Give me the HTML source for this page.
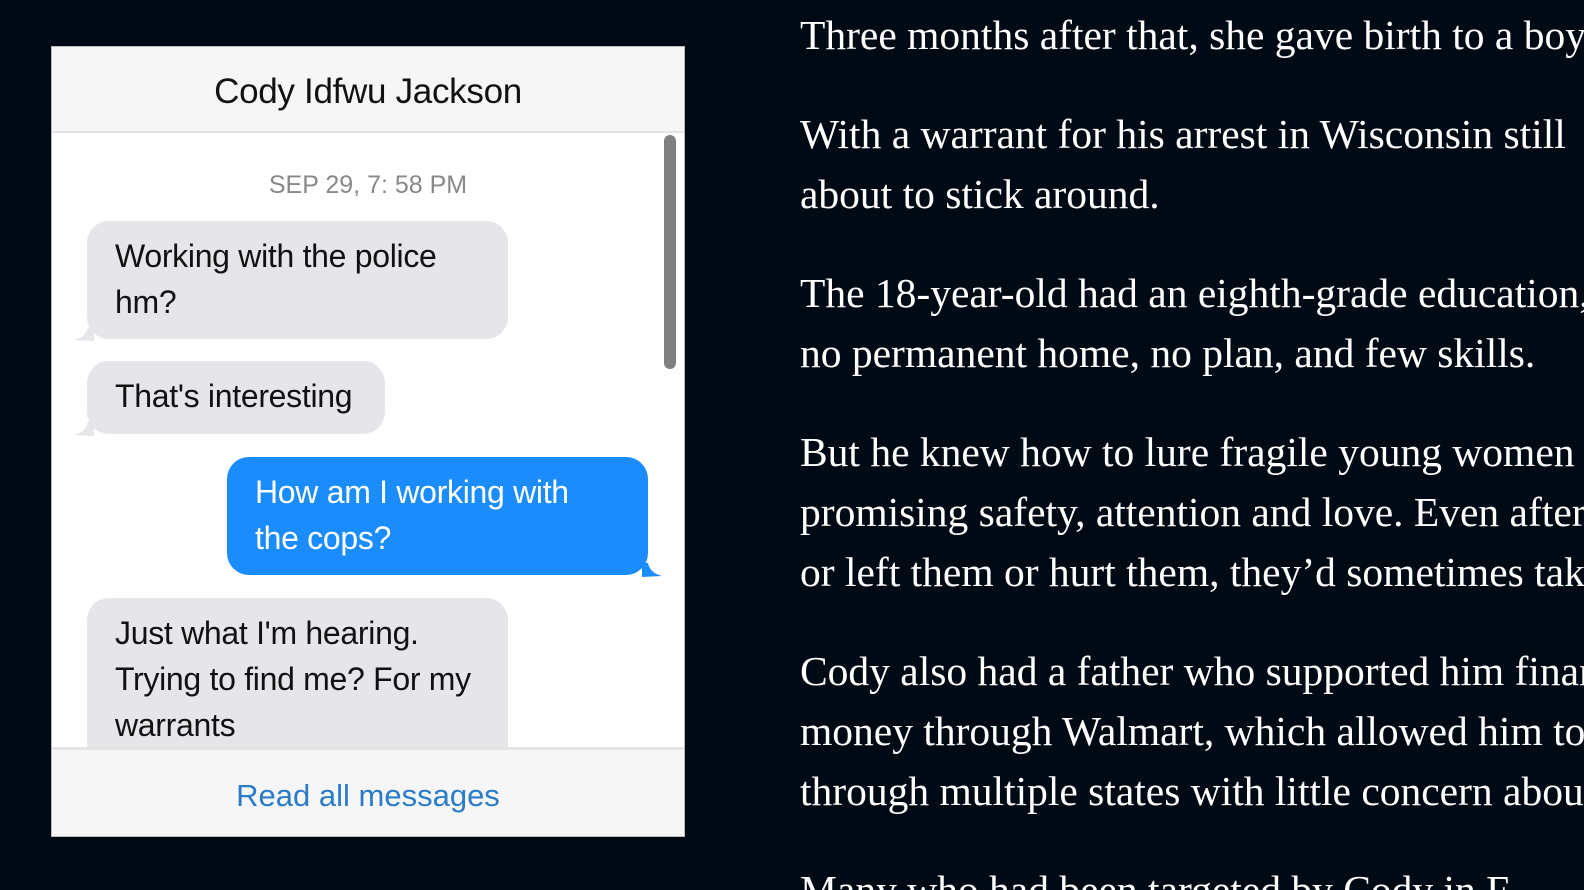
<!DOCTYPE html>
<html style="height:890px;overflow:hidden;"><head><style>
html,body{margin:0;background:#000a14;}
.wrap{width:1584px;height:890px;overflow:hidden;position:relative;background:#000a14;}
.panel{position:absolute;left:51px;top:46px;width:632px;height:789px;background:#fff;border:1px solid #bbb;overflow:hidden;font-family:"Liberation Sans",sans-serif;}
.hdr{height:84px;background:#f6f6f6;border-bottom:2px solid #e4e4e4;text-align:center;line-height:90px;font-size:35px;color:#111;letter-spacing:-0.3px;}
.ts{position:absolute;top:124px;width:100%;text-align:center;color:#888;font-size:25px;}
.b{position:absolute;background:#e5e5ea;color:#111;border-radius:22px;font-size:32px;line-height:46px;padding:12px 28px;box-sizing:border-box;letter-spacing:-0.3px;white-space:nowrap;}
.me{background:#1a8cfc;color:#fff;}
.tail{position:absolute;width:20px;height:14px;}
.scroll{position:absolute;left:612px;top:88px;width:12px;height:234px;background:#808080;border-radius:6px;}
.ftr{position:absolute;left:0;top:700px;width:100%;height:90px;background:#f6f6f6;border-top:3px solid #e4e4e4;text-align:center;line-height:92px;font-size:31px;color:#2a7cc8;}
.txt{position:absolute;left:800px;top:5px;width:900px;font-family:"Liberation Serif",serif;font-size:41.5px;line-height:60px;color:#fff;white-space:nowrap;}
.txt p{margin:0 0 39px 0;}
</style></head><body>
<div class="wrap">
<div class="panel">
<div class="hdr">Cody Idfwu Jackson</div>
<div class="ts">SEP 29, 7: 58 PM</div>
<div class="b" style="left:35px;top:174px;width:421px;height:118px;">Working with the police<br>hm?</div>
<svg class="tail" style="left:22px;top:280px" viewBox="0 0 20 14"><path d="M20 0 L20 14 L0 13 Q12 10 14 0Z" fill="#e5e5ea"/></svg>
<div class="b" style="left:35px;top:314px;width:298px;height:73px;">That's interesting</div>
<svg class="tail" style="left:22px;top:375px" viewBox="0 0 20 14"><path d="M20 0 L20 14 L0 13 Q12 10 14 0Z" fill="#e5e5ea"/></svg>
<div class="b me" style="left:175px;top:410px;width:421px;height:118px;">How am I working with<br>the cops?</div>
<svg class="tail" style="left:590px;top:516px" viewBox="0 0 20 14"><path d="M0 0 L0 14 L20 13 Q8 10 6 0Z" fill="#1a8cfc"/></svg>
<div class="b" style="left:35px;top:551px;width:421px;height:170px;">Just what I'm hearing.<br>Trying to find me? For my<br>warrants</div>
<div class="scroll"></div>
<div class="ftr">Read all messages</div>
</div>
<div class="txt">
<p>Three months after that, she gave birth to a boy.</p>
<p>With a warrant for his arrest in Wisconsin still<br>about to stick around.</p>
<p>The 18-year-old had an eighth-grade education,<br>no permanent home, no plan, and few skills.</p>
<p>But he knew how to lure fragile young women<br>promising safety, attention and love. Even after<br>or left them or hurt them, they’d sometimes take</p>
<p>Cody also had a father who supported him finan<br>money through Walmart, which allowed him to<br>through multiple states with little concern about</p>
<p>Many who had been targeted by Cody in F</p>
</div>
</div>
</body></html>
